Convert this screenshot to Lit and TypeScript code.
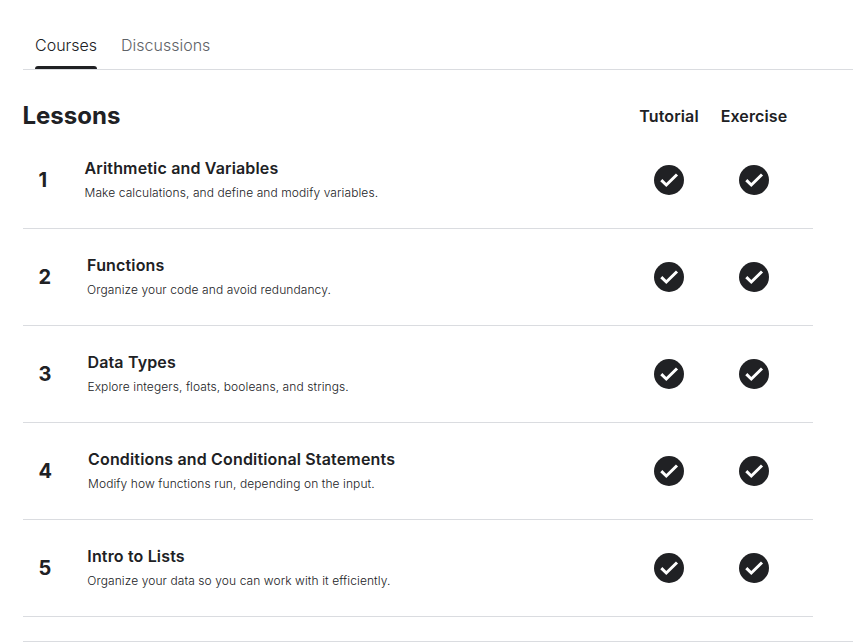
import { LitElement, html, css } from "lit";
import { customElement } from "lit/decorators.js";

const lessons = [
  ["Arithmetic and Variables", "Make calculations, and define and modify variables."],
  ["Functions", "Organize your code and avoid redundancy."],
  ["Data Types", "Explore integers, floats, booleans, and strings."],
  ["Conditions and Conditional Statements", "Modify how functions run, depending on the input."],
  ["Intro to Lists", "Organize your data so you can work with it efficiently."],
];

const check = html`<svg class="check" viewBox="0 0 30 30"><circle cx="15" cy="15" r="15" fill="#202124"/><path fill="none" stroke="#fff" stroke-width="3" d="M7.3 15.2l5 4.8L23 9.5"/></svg>`;

@customElement("app-root")
export class AppRoot extends LitElement {
  static styles = css`
    :host { display: block; height: 644px; overflow: hidden; background: #fff; color: #202124; font-family: Inter, sans-serif; padding-left: 23px; box-sizing: border-box; }
    .tabs { display: flex; box-sizing: border-box; height: 70px; padding: 22px 0 0 12px; gap: 24px; border-bottom: 1px solid #dadce0; font-size: 16px; line-height: 47px; color: #5f6368; font-weight: 300; }
    .tab { height: 47px; }
    .active { color: #202124; position: relative; }
    .active::after { content: ""; position: absolute; left: 0; right: 0; bottom: 0; height: 3px; background: #202124; border-radius: 3px 3px 0 0; }
    .head { display: flex; align-items: center; width: 790px; height: 62px; padding-top: 30px; box-sizing: border-box; }
    h1 { flex: 1; margin: 0 0 0 -0.5px; font-size: 24px; font-weight: 700; line-height: 32px; }
    .col { width: 85px; text-align: center; font-size: 16px; font-weight: 600; line-height: 20px; letter-spacing: 0.12px; }
    .cols { display: flex; margin-right: 16.5px; }
    .row { display: flex; box-sizing: border-box; width: 790px; height: 97px; border-bottom: 1px solid #dadce0; }
    .num { min-width: 10px; padding: 36px 0 0 15.5px; margin-right: 36px; font-size: 20px; font-weight: 700; line-height: 24px; }
    .text { flex: 1; padding-top: 26px; }
    .title { font-size: 16px; font-weight: 600; line-height: 20px; letter-spacing: 0.16px; }
    .desc { font-size: 12px; line-height: 20px; margin-top: 5px; font-weight: 300; letter-spacing: 0.09px; }
    .marks { display: flex; padding-top: 33px; margin-right: 17px; }
    .mark { width: 85px; display: flex; justify-content: center; }
    .check { display: block; width: 30px; height: 30px; }
    .end { margin-top: 24px; height: 1px; background: #dadce0; }
  `;

  render() {
    return html`
      <nav class="tabs"><div class="tab active">Courses</div><div class="tab">Discussions</div></nav>
      <header class="head"><h1>Lessons</h1><div class="cols"><div class="col">Tutorial</div><div class="col">Exercise</div></div></header>
      ${lessons.map(([t, d], i) => html`<section class="row">
        <div class="num">${i + 1}</div>
        <div class="text"><div class="title">${t}</div><div class="desc">${d}</div></div>
        <div class="marks"><div class="mark">${check}</div><div class="mark">${check}</div></div>
      </section>`)}
      <div class="end"></div>`;
  }
}
